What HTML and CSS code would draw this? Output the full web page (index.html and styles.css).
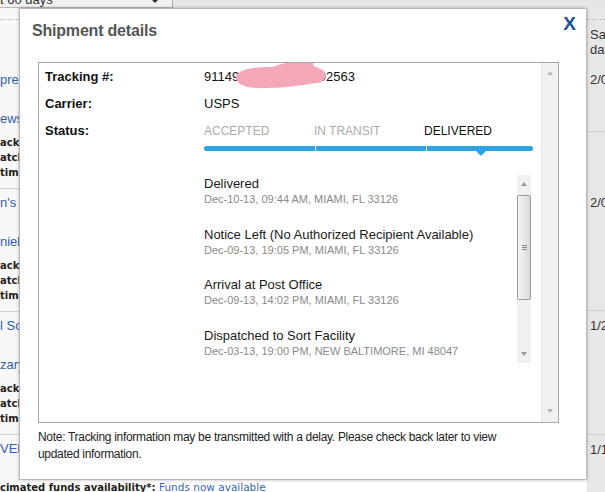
FILE: index.html
```html
<!DOCTYPE html>
<html lang="en">
<head>
<meta charset="utf-8">
<title>Shipment details</title>
<link rel="stylesheet" href="styles.css">
</head>
<body>
<div class="page">
  <div class="topbar">
    <div class="range"><span class="range-text">Last 60 days</span><span class="caret"></span></div>
    <div class="topfill"></div>
  </div>
  <div class="content">
    <div class="leftcol">
      <div class="l-lead"><div class="dots"></div></div>
      <div class="lrow">
        <div class="l-name">pres</div>
        <div class="l-name second">ews</div>
        <div class="l-bold first">acki</div>
        <div class="l-bold">atch</div>
        <div class="l-bold">tima</div>
      </div>
      <div class="lrow">
        <div class="l-name">n's</div>
        <div class="l-name second">niel</div>
        <div class="l-bold first">acki</div>
        <div class="l-bold">atch</div>
        <div class="l-bold">tima</div>
      </div>
      <div class="lrow">
        <div class="l-name">l So</div>
        <div class="l-name second">zary</div>
        <div class="l-bold first">acki</div>
        <div class="l-bold">atch</div>
        <div class="l-bold">tima</div>
      </div>
      <div class="lrow last">
        <div class="l-name">VEN</div>
        <div class="l-foot">cimated funds availability*: <span class="l-link">Funds now available</span></div>
      </div>
    </div>
    <div class="midcol"></div>
    <div class="rightcol">
      <div class="r-block r-a">
        <div class="dots"></div>
        <div class="r-head">Sale date</div>
        <div class="r-date">2/04/2014</div>
      </div>
      <div class="r-block r-b"><div class="r-date">2/03/2014</div></div>
      <div class="r-block r-c"><div class="r-date">1/28/2014</div></div>
      <div class="r-block r-d"><div class="r-date">1/15/2014</div></div>
    </div>
  </div>
</div>

<div class="modal">
  <div class="modal-head">
    <h2 class="modal-title">Shipment details</h2>
    <span class="close">X</span>
  </div>
  <div class="modal-body">
    <div class="track-box">
      <div class="track-main">
        <div class="row">
          <div class="lbl">Tracking #:</div>
          <div class="val num">911499999999999992563<svg class="redact" width="96" height="34" viewBox="0 0 96 34"><path d="M4 23 C 3 15, 20 12, 40 12 C 55 8, 68 2, 80 1 C 86 0, 88 4, 82 8 C 78 11, 86 12, 92 16 C 96 22, 92 28, 84 28 C 70 30, 55 33, 35 33 C 15 34, 5 30, 4 23 Z" fill="#f4a7b7"/></svg></div>
        </div>
        <div class="row">
          <div class="lbl">Carrier:</div>
          <div class="val">USPS</div>
        </div>
        <div class="row status-row">
          <div class="lbl">Status:</div>
          <div class="status">
            <div class="steps">
              <span class="step">ACCEPTED</span>
              <span class="step">IN TRANSIT</span>
              <span class="step current">DELIVERED</span>
            </div>
            <div class="bar">
              <span class="seg s1"></span>
              <span class="seg s2"></span>
              <span class="seg s3 cur"></span>
            </div>
            <div class="events">
              <div class="ev-list">
                <div class="ev">
                  <div class="ev-title">Delivered</div>
                  <div class="ev-sub">Dec-10-13, 09:44 AM, MIAMI, FL 33126</div>
                </div>
                <div class="ev">
                  <div class="ev-title">Notice Left (No Authorized Recipient Available)</div>
                  <div class="ev-sub">Dec-09-13, 19:05 PM, MIAMI, FL 33126</div>
                </div>
                <div class="ev">
                  <div class="ev-title">Arrival at Post Office</div>
                  <div class="ev-sub">Dec-09-13, 14:02 PM, MIAMI, FL 33126</div>
                </div>
                <div class="ev">
                  <div class="ev-title">Dispatched to Sort Facility</div>
                  <div class="ev-sub">Dec-03-13, 19:00 PM, NEW BALTIMORE, MI 48047</div>
                </div>
                <div class="ev">
                  <div class="ev-title">Accepted at USPS Origin Sort Facility</div>
                  <div class="ev-sub">Dec-03-13, 17:12 PM, NEW BALTIMORE, MI 48047</div>
                </div>
              </div>
              <div class="sscroll">
                <div class="sbtn"><span class="arr up"></span></div>
                <div class="thumb"><span class="grip"></span></div>
                <div class="sfill"></div>
                <div class="sbtn"><span class="arr down"></span></div>
              </div>
            </div>
          </div>
        </div>
      </div>
      <div class="bscroll">
        <span class="arr up"></span>
        <span class="arr down"></span>
      </div>
    </div>
    <p class="note">Note: Tracking information may be transmitted with a delay. Please check back later to view updated information.</p>
  </div>
</div>
</body>
</html>
```

FILE: styles.css
```css
* { box-sizing: border-box; }
html, body { margin: 0; padding: 0; }
body {
  width: 605px;
  height: 492px;
  overflow: hidden;
  position: relative;
  background: #fff;
  color: #222;
  font-family: "Liberation Sans", Arial, sans-serif;
}

/* ---------- background page ---------- */
.page { height: 492px; display: flex; flex-direction: column; }
.topbar { height: 8px; display: flex; background: #e6e6e6; overflow: hidden; flex: none; }
.range {
  width: 173px;
  border-right: 1px solid #a9a9a9;
  border-bottom: 1px solid #b9b9b9;
  background: #f1f1f1;
  position: relative;
  overflow: hidden;
  font-size: 13px;
  color: #333;
}
.range-text { display: block; margin: -8px 0 0 -21px; line-height: 16px; white-space: nowrap; }
.caret {
  position: absolute;
  left: 152px;
  top: 0;
  border-left: 3px solid transparent;
  border-right: 3px solid transparent;
  border-top: 3px solid #333;
}
.topfill { flex: 1; }

.content { flex: 1; display: flex; min-height: 0; }
.leftcol {
  flex: none;
  width: 21px;
  margin-left: -2px;
  padding-left: 2px;
  background: #f8f8f8;
  white-space: nowrap;
}
.dots { height: 12px; border-bottom: 1px dotted #b5b5b5; }
.l-lead { height: 58px; }
.lrow { height: 123px; border-bottom: 1px solid #d2d2d2; padding-top: 6px; }
.lrow.last { border-bottom: none; height: auto; }
.l-name { font-size: 13px; line-height: 16px; color: #2f5fae; }
.l-name.second { margin-top: 23px; }
.l-bold { font-family: "DejaVu Sans", Verdana, sans-serif; font-weight: bold; font-size: 10px; line-height: 15px; color: #222; }
.l-bold.first { margin-top: 8px; }
.l-foot { margin-top: 23px; font-family: "DejaVu Sans", Verdana, sans-serif; font-weight: bold; font-size: 10px; line-height: 15px; color: #222; }
.l-link { font-weight: normal; color: #3a67b5; font-size: 10.5px; }

.midcol { flex: 1; }
.rightcol {
  width: 18px;
  flex: none;
  background: #e7e7e7;
  overflow: hidden;
  white-space: nowrap;
  font-size: 13px;
  color: #333;
}
.r-block { border-bottom: 1px solid #d0d0d0; padding-left: 3px; }
.r-block .dots { margin-left: -3px; }
.r-a { height: 124px; }
.r-b { height: 179px; padding-top: 63px; }
.r-c { height: 124px; padding-top: 7px; }
.r-d { border-bottom: none; padding-top: 7px; }
.r-head { margin-top: 7px; line-height: 15px; white-space: normal; width: 14px; }
.r-date { line-height: 15px; }
.r-a .r-date { margin-top: 15px; }

/* ---------- modal ---------- */
.modal {
  position: absolute;
  left: 19px;
  top: 8px;
  width: 568px;
  height: 472px;
  background: #fff;
  border: 1px solid #b9b9b9;
  box-shadow: 0 0 3px rgba(0, 0, 0, 0.3);
}
.modal-head { position: relative; padding: 12px 12px 21px 12px; }
.modal-title { margin: 0; font-size: 16px; line-height: 20px; font-weight: bold; color: #555; letter-spacing: -0.2px; }
.close {
  position: absolute;
  right: 10px;
  top: 5px;
  font-size: 19px;
  line-height: 19px;
  font-weight: bold;
  color: #1d50a0;
}
.modal-body { padding: 0 27px 0 18px; }

.track-box {
  display: flex;
  height: 361px;
  border: 1px solid #a6a6a6;
}
.track-main { flex: 1; padding-left: 6px; overflow: hidden; }
.row { display: flex; font-size: 13px; }
.lbl { width: 159px; flex: none; line-height: 27px; font-weight: bold; color: #111; }
.val { line-height: 27px; color: #111; position: relative; }
.redact { position: absolute; left: 28px; top: -8px; }

.status { width: 329px; }
.steps { display: grid; grid-template-columns: 110px 110px auto; padding-top: 7px; font-size: 12px; line-height: 14px; color: #ababab; }
.step.current { color: #111; }
.bar { display: flex; gap: 1px; margin-top: 8px; height: 5px; }
.seg { display: block; height: 5px; background: #2ea2e2; position: relative; }
.s1 { width: 111px; border-radius: 3px 0 0 3px; }
.s2 { width: 110px; }
.s3 { width: 106px; border-radius: 0 3px 3px 0; }
.cur::after {
  content: "";
  position: absolute;
  left: 49px;
  top: 5px;
  border-left: 5px solid transparent;
  border-right: 5px solid transparent;
  border-top: 5px solid #2ea2e2;
}

.events { display: flex; width: 327px; height: 188px; margin-top: 24px; }
.ev-list { flex: 1; overflow: hidden; padding-top: 1px; }
.ev { margin-bottom: 20.5px; }
.ev-title { font-size: 13px; line-height: 16px; color: #1a1a1a; white-space: nowrap; }
.ev-sub { font-size: 11px; line-height: 14px; color: #8a8a8a; white-space: nowrap; }

.sscroll { width: 14px; display: flex; flex-direction: column; background: #f1f1f1; }
.sbtn { height: 18px; display: flex; align-items: center; justify-content: center; }
.thumb {
  margin: 2px 0 0 0;
  height: 105px;
  border: 1px solid #9c9c9c;
  border-radius: 2px;
  background: linear-gradient(to right, #f4f4f4, #dadada);
  display: flex;
  align-items: center;
  justify-content: center;
}
.grip { width: 5px; height: 1px; background: #8a8a8a; box-shadow: 0 2px 0 #8a8a8a, 0 -2px 0 #8a8a8a; }
.sfill { flex: 1; }

.arr { display: block; width: 0; height: 0; border-left: 3px solid transparent; border-right: 3px solid transparent; }
.arr.up { border-bottom: 4px solid #9a9a9a; }
.arr.down { border-top: 4px solid #9a9a9a; }

.bscroll {
  width: 17px;
  flex: none;
  background: #f1f1f1;
  border-left: 1px solid #e6e6e6;
  display: flex;
  flex-direction: column;
  justify-content: space-between;
  align-items: center;
  padding: 8px 0 9px;
}
.bscroll .arr { border-left-width: 3.5px; border-right-width: 3.5px; }
.bscroll .arr.up { border-bottom-color: #b4b4b4; }
.bscroll .arr.down { border-top-color: #b4b4b4; }

.note { margin: 6px 0 0; max-width: 470px; font-size: 12px; line-height: 17px; color: #222; letter-spacing: -0.3px; }
```
